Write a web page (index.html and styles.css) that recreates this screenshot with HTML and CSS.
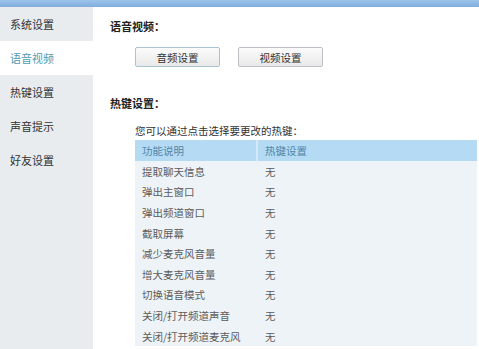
FILE: index.html
```html
<!DOCTYPE html>
<html lang="zh-CN">
<head>
    <meta charset="UTF-8">
    <title>设置</title>
    <link rel="stylesheet" href="styles.css">
</head>
<body>
    <div class="topbar"></div>
    <div class="layout">
        <ul class="sidebar">
            <li>系统设置</li>
            <li class="active">语音视频</li>
            <li>热键设置</li>
            <li>声音提示</li>
            <li>好友设置</li>
        </ul>

        <div class="main">
            <h3 class="title">语音视频：</h3>
            <div class="btns">
                <button class="btn focus">音频设置</button>
                <button class="btn">视频设置</button>
            </div>

            <h3 class="title hotkey">热键设置：</h3>
            <p class="hint">您可以通过点击选择要更改的热键：</p>

            <table class="tab" cellspacing="0">
                <thead>
                    <tr>
                        <th class="c1">功能说明</th>
                        <th>热键设置</th>
                    </tr>
                </thead>
                <tbody>
                    <tr><td>提取聊天信息</td><td>无</td></tr>
                    <tr><td>弹出主窗口</td><td>无</td></tr>
                    <tr><td>弹出频道窗口</td><td>无</td></tr>
                    <tr><td>截取屏幕</td><td>无</td></tr>
                    <tr><td>减少麦克风音量</td><td>无</td></tr>
                    <tr><td>增大麦克风音量</td><td>无</td></tr>
                    <tr><td>切换语音模式</td><td>无</td></tr>
                    <tr><td>关闭/打开频道声音</td><td>无</td></tr>
                    <tr><td>关闭/打开频道麦克风</td><td>无</td></tr>
                </tbody>
            </table>
        </div>
    </div>
</body>
</html>
```

FILE: styles.css
```css
*{
    margin: 0px;
    padding: 0px;
}

body{
    font-family: "Noto Sans CJK SC", "Liberation Sans", sans-serif;
    font-size: 10.5px;
    color: #333;
    background-color: white;
    overflow: hidden;
}

.topbar{
    height: 7px;
    background: linear-gradient(#9cc4ea, #80ade0);
}

.layout{
    display: flex;
    height: 342px;
}

.sidebar{
    width: 93px;
    list-style: none;
    background-color: #e8ecef;
}

.sidebar li{
    height: 34px;
    line-height: 34px;
    padding-left: 10px;
    font-size: 11px;
    color: #333;
}

.sidebar li.active{
    background-color: white;
    color: #4d9cb4;
}

.main{
    flex: 1;
    padding-left: 17px;
}

.main .title{
    font-size: 11px;
    font-weight: bold;
    line-height: 16px;
    margin-top: 11px;
    color: #222;
}

.main .title.hotkey{
    margin-top: 28px;
}

.btns{
    display: flex;
    gap: 18px;
    margin-top: 13px;
    padding-left: 25px;
}

.btn{
    width: 85px;
    height: 20px;
    font-family: inherit;
    font-size: 10.5px;
    color: #333;
    background: linear-gradient(#fbfbfb, #e9e9e9);
    border: 1px solid #bcc0c4;
    border-radius: 2px;
}

.btn.focus{
    border-color: #a8c4d4;
}

.hint{
    margin-top: 12px;
    margin-left: 25px;
    line-height: 16px;
    color: #333;
}

.tab{
    width: 342px;
    margin-left: 25px;
    margin-top: 1px;
    background-color: #eef3f8;
    color: #5c5c5c;
    text-align: left;
}

.tab th{
    height: 21px;
    font-weight: normal;
    background-color: #b4daf4;
    color: #4f86aa;
    padding-left: 7px;
}

.tab th.c1{
    width: 114px;
    border-right: 2px solid #d4e9f8;
}

.tab td{
    height: 20.6px;
    padding-left: 7px;
}
```
